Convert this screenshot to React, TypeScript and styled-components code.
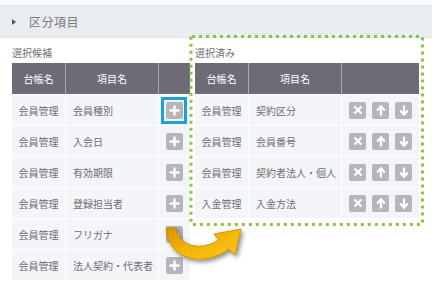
import styled, { createGlobalStyle } from "styled-components";

const GlobalStyle = createGlobalStyle`
  body {
    margin: 0;
    background: #fff;
    font-family: "Noto Sans CJK JP", "Noto Sans", sans-serif;
  }
`;

type Kind = "plus" | "cross" | "up" | "down";

const candidates = [
  ["会員管理", "会員種別"],
  ["会員管理", "入会日"],
  ["会員管理", "有効期限"],
  ["会員管理", "登録担当者"],
  ["会員管理", "フリガナ"],
  ["会員管理", "法人契約・代表者"],
];

const selected = [
  ["会員管理", "契約区分"],
  ["会員管理", "会員番号"],
  ["会員管理", "契約者法人・個人"],
  ["入金管理", "入金方法"],
];

const Glyph = ({ kind }: { kind: Kind }) => {
  if (kind === "plus")
    return (
      <svg width="11" height="11" viewBox="0 0 11 11">
        <rect x="4.3" y="0.5" width="2.4" height="10" fill="#fff" />
        <rect x="0.5" y="4.3" width="10" height="2.4" fill="#fff" />
      </svg>
    );
  if (kind === "cross")
    return (
      <svg width="10" height="10" viewBox="0 0 10 10">
        <path d="M1.5 1.5 L8.5 8.5 M8.5 1.5 L1.5 8.5" stroke="#fff" strokeWidth="2.3" />
      </svg>
    );
  return (
    <svg width="10" height="11" viewBox="0 0 10 11" style={{ transform: kind === "down" ? "rotate(180deg)" : undefined }}>
      <path d="M5 2 L5 10.5" stroke="#fff" strokeWidth="2.2" />
      <path d="M1.2 5.4 L5 1.3 L8.8 5.4" stroke="#fff" strokeWidth="2.2" fill="none" />
    </svg>
  );
};

const App = () => {
  return (
    <Page>
      <GlobalStyle />
      <TopStrip />
      <SectionHeader>
        <Caret />
        <Title>区分項目</Title>
      </SectionHeader>
      <Body>
        <Panel>
          <Label>選択候補</Label>
          <HeadRow $cols="54px 93px 31px">
            <HeadCell>台帳名</HeadCell>
            <HeadCell>項目名</HeadCell>
            <HeadCell />
          </HeadRow>
          {candidates.map(([book, item], i) => (
            <Row key={item} $cols="54px 93px 31px">
              <Cell $center>{book}</Cell>
              <Cell>{item}</Cell>
              <Cell $center>
                <IconButton $highlight={i === 0}>
                  <Glyph kind="plus" />
                </IconButton>
              </Cell>
            </Row>
          ))}
        </Panel>
        <Panel>
          <Label>選択済み</Label>
          <HeadRow $cols="54px 93px 77px">
            <HeadCell>台帳名</HeadCell>
            <HeadCell>項目名</HeadCell>
            <HeadCell />
          </HeadRow>
          {selected.map(([book, item]) => (
            <Row key={item} $cols="54px 93px 77px">
              <Cell $center>{book}</Cell>
              <Cell>{item}</Cell>
              <Cell $center>
                <Actions>
                  <IconButton>
                    <Glyph kind="cross" />
                  </IconButton>
                  <IconButton>
                    <Glyph kind="up" />
                  </IconButton>
                  <IconButton>
                    <Glyph kind="down" />
                  </IconButton>
                </Actions>
              </Cell>
            </Row>
          ))}
        </Panel>
      </Body>

      <Overlay width="432" height="284" viewBox="0 0 432 284">
        <defs>
          <linearGradient id="arrowFill" x1="0" y1="0" x2="1" y2="1">
            <stop offset="0" stopColor="#d39400" />
            <stop offset="0.45" stopColor="#f2b300" />
            <stop offset="1" stopColor="#ffc820" />
          </linearGradient>
          <filter id="shadow" x="-30%" y="-30%" width="160%" height="160%">
            <feDropShadow dx="2" dy="2.5" stdDeviation="2" floodColor="#000" floodOpacity="0.45" />
          </filter>
        </defs>
        <rect
          x="191"
          y="36.5"
          width="231.5"
          height="188"
          rx="1"
          fill="none"
          stroke="#8cc63f"
          strokeWidth="3"
          strokeDasharray="3 4"
        />
        <path
          filter="url(#shadow)"
          d="M166 228 L176 228 C178 244 197 253 219 240 L214 234 L241 229 L235 255 L229 249 C203 268 168 260 166 228 Z"
          fill="url(#arrowFill)"
          stroke="#c48800"
          strokeWidth="0.8"
        />
      </Overlay>
    </Page>
  );
};

export default App;

const Page = styled.div`
  position: relative;
  width: 432px;
  height: 284px;
  overflow: hidden;
  background: #fff;
`;

const TopStrip = styled.div`
  height: 5px;
  background: #f9fafb;
  border-bottom: 1px solid #dfe2e6;
`;

const SectionHeader = styled.div`
  height: 31px;
  display: flex;
  align-items: center;
  gap: 13px;
  padding-left: 12px;
  background: #e9ecf0;
  border-bottom: 1px solid #dfe2e6;
`;

const Caret = styled.span`
  width: 0;
  height: 0;
  border-top: 3.5px solid transparent;
  border-bottom: 3.5px solid transparent;
  border-left: 4px solid #555;
`;

const Title = styled.span`
  font-size: 12px;
  color: #7a7a7a;
  letter-spacing: 0.5px;
`;

const Body = styled.div`
  display: flex;
  gap: 5px;
  padding: 7px 12px 0 12px;
`;

const Panel = styled.div`
  display: flex;
  flex-direction: column;
`;

const Label = styled.div`
  height: 16px;
  line-height: 16px;
  margin-bottom: 2px;
  font-size: 10px;
  color: #6e6e6e;
`;

const HeadRow = styled.div<{ $cols: string }>`
  display: grid;
  grid-template-columns: ${(p) => p.$cols};
  height: 31px;
  background: #6d6c76;
`;

const HeadCell = styled.div`
  display: flex;
  align-items: center;
  justify-content: center;
  border-right: 1px solid #a9a8ae;
  font-size: 10px;
  color: #fff;
  &:last-child {
    border-right: none;
  }
`;

const Row = styled.div<{ $cols: string }>`
  display: grid;
  grid-template-columns: ${(p) => p.$cols};
  height: 31px;
  box-sizing: border-box;
  border-top: 1px solid #fff;
  background: #f4f5f9;
`;

const Cell = styled.div<{ $center?: boolean }>`
  display: flex;
  align-items: center;
  justify-content: ${(p) => (p.$center ? "center" : "flex-start")};
  padding-left: ${(p) => (p.$center ? "0" : "7px")};
  border-right: 1px solid #fff;
  font-size: 10px;
  color: #6e6e6e;
  white-space: nowrap;
  &:last-child {
    border-right: none;
  }
`;

const Actions = styled.div`
  display: flex;
  gap: 6px;
`;

const IconButton = styled.span<{ $highlight?: boolean }>`
  position: relative;
  width: 17px;
  height: 17px;
  display: flex;
  align-items: center;
  justify-content: center;
  border-radius: 2px;
  background: #b5b6ba;
  &::after {
    content: "";
    display: ${(p) => (p.$highlight ? "block" : "none")};
    position: absolute;
    left: -5px;
    top: -5px;
    right: -4px;
    bottom: -5px;
    border: 3px solid #1aa0dc;
  }
`;

const Overlay = styled.svg`
  position: absolute;
  left: 0;
  top: 0;
  pointer-events: none;
`;
